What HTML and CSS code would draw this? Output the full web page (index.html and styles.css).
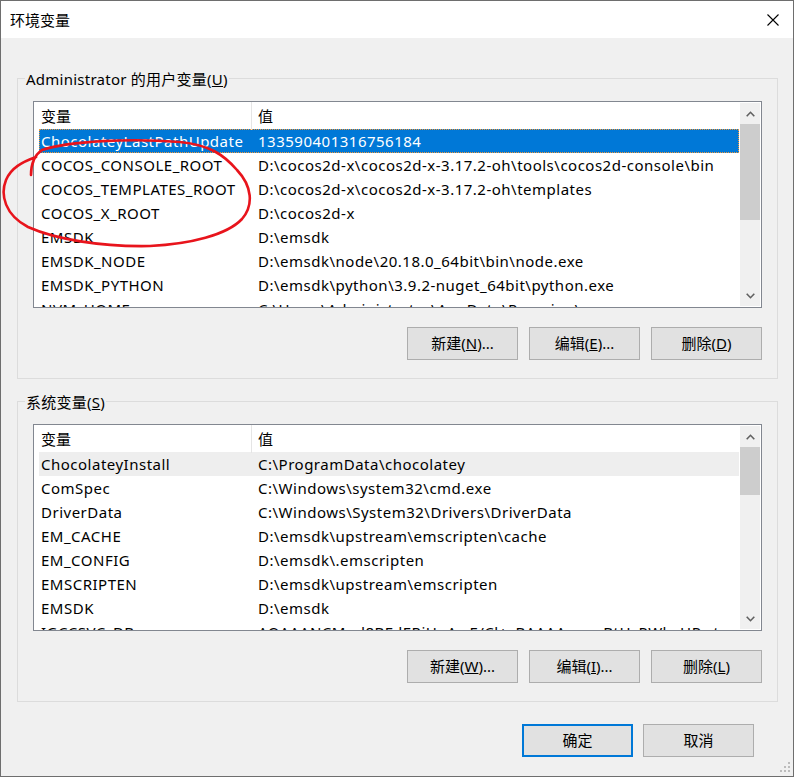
FILE: index.html
```html
<!DOCTYPE html>
<html lang="zh-CN">
<head>
<meta charset="utf-8">
<title>环境变量</title>
<link rel="stylesheet" href="styles.css">
</head>
<body>
<div class="window">
  <div class="titlebar">
    <span class="title">环境变量</span>
    <svg class="close" width="12" height="12" viewBox="0 0 12 12"><path d="M0.5 0.5 L11.5 11.5 M11.5 0.5 L0.5 11.5" stroke="#000" stroke-width="1.1" fill="none"/></svg>
  </div>

  <div class="content">
    <div class="group">
      <span class="group-label">Administrator 的用户变量(<u>U</u>)</span>
      <div class="list">
        <div class="list-body">
          <div class="thead"><div class="th">变量</div><div class="th th-val">值</div></div>
          <div class="row selected"><div class="c1">ChocolateyLastPathUpdate</div><div class="c2">133590401316756184</div></div>
          <div class="row"><div class="c1">COCOS_CONSOLE_ROOT</div><div class="c2">D:\cocos2d-x\cocos2d-x-3.17.2-oh\tools\cocos2d-console\bin</div></div>
          <div class="row"><div class="c1">COCOS_TEMPLATES_ROOT</div><div class="c2">D:\cocos2d-x\cocos2d-x-3.17.2-oh\templates</div></div>
          <div class="row"><div class="c1">COCOS_X_ROOT</div><div class="c2">D:\cocos2d-x</div></div>
          <div class="row"><div class="c1">EMSDK</div><div class="c2">D:\emsdk</div></div>
          <div class="row"><div class="c1">EMSDK_NODE</div><div class="c2">D:\emsdk\node\20.18.0_64bit\bin\node.exe</div></div>
          <div class="row"><div class="c1">EMSDK_PYTHON</div><div class="c2">D:\emsdk\python\3.9.2-nuget_64bit\python.exe</div></div>
          <div class="row"><div class="c1">NVM_HOME</div><div class="c2">C:\Users\Administrator\AppData\Roaming\nvm</div></div>
        </div>
        <div class="scrollbar">
          <div class="sb-btn"><svg width="9" height="6" viewBox="0 0 9 6"><polyline points="0.7,5.3 4.5,1.3 8.3,5.3" fill="none" stroke="#606060" stroke-width="1.6"/></svg></div>
          <div class="sb-track"><div class="sb-thumb thumb-user"></div></div>
          <div class="sb-btn"><svg width="9" height="6" viewBox="0 0 9 6"><polyline points="0.7,0.7 4.5,4.7 8.3,0.7" fill="none" stroke="#606060" stroke-width="1.6"/></svg></div>
        </div>
      </div>
      <div class="btn-row">
        <button class="btn">新建(<u>N</u>)...</button>
        <button class="btn">编辑(<u>E</u>)...</button>
        <button class="btn">删除(<u>D</u>)</button>
      </div>
    </div>

    <div class="group group-sys">
      <span class="group-label">系统变量(<u>S</u>)</span>
      <div class="list">
        <div class="list-body">
          <div class="thead"><div class="th">变量</div><div class="th th-val">值</div></div>
          <div class="row inactive"><div class="c1">ChocolateyInstall</div><div class="c2">C:\ProgramData\chocolatey</div></div>
          <div class="row"><div class="c1">ComSpec</div><div class="c2">C:\Windows\system32\cmd.exe</div></div>
          <div class="row"><div class="c1">DriverData</div><div class="c2">C:\Windows\System32\Drivers\DriverData</div></div>
          <div class="row"><div class="c1">EM_CACHE</div><div class="c2">D:\emsdk\upstream\emscripten\cache</div></div>
          <div class="row"><div class="c1">EM_CONFIG</div><div class="c2">D:\emsdk\.emscripten</div></div>
          <div class="row"><div class="c1">EMSCRIPTEN</div><div class="c2">D:\emsdk\upstream\emscripten</div></div>
          <div class="row"><div class="c1">EMSDK</div><div class="c2">D:\emsdk</div></div>
          <div class="row"><div class="c1">IGCCSVC_DB</div><div class="c2">AQAAANCMnd8BFdERjHoAwE/Cl+sBAAAAoxnnBtHzPWbsHPwt</div></div>
        </div>
        <div class="scrollbar">
          <div class="sb-btn"><svg width="9" height="6" viewBox="0 0 9 6"><polyline points="0.7,5.3 4.5,1.3 8.3,5.3" fill="none" stroke="#606060" stroke-width="1.6"/></svg></div>
          <div class="sb-track"><div class="sb-thumb thumb-sys"></div></div>
          <div class="sb-btn"><svg width="9" height="6" viewBox="0 0 9 6"><polyline points="0.7,0.7 4.5,4.7 8.3,0.7" fill="none" stroke="#606060" stroke-width="1.6"/></svg></div>
        </div>
      </div>
      <div class="btn-row">
        <button class="btn">新建(<u>W</u>)...</button>
        <button class="btn">编辑(<u>I</u>)...</button>
        <button class="btn">删除(<u>L</u>)</button>
      </div>
    </div>

    <div class="footer">
      <button class="btn btn-default">确定</button>
      <button class="btn">取消</button>
    </div>
  </div>

  <svg class="annotation" width="260" height="260" viewBox="0 0 260 260">
    <path d="M31,175 C31,165 33,156 42,150 C70,141 130,138 180,142 C210,145 224,155 237,170 C252,186 254,205 242,219 C227,235 190,244 150,246 C100,247 55,239 28,227 C5,215 0,195 6,180 C11,168 22,162 36,157" fill="none" stroke="#e8141c" stroke-width="2.6" stroke-linecap="round"/>
  </svg>

  <svg class="grip" width="12" height="12" viewBox="0 0 12 12">
    <rect x="9" y="0" width="2" height="2" fill="#bcbcbc"/>
    <rect x="5" y="4" width="2" height="2" fill="#bcbcbc"/>
    <rect x="9" y="4" width="2" height="2" fill="#bcbcbc"/>
    <rect x="1" y="8" width="2" height="2" fill="#bcbcbc"/>
    <rect x="5" y="8" width="2" height="2" fill="#bcbcbc"/>
    <rect x="9" y="8" width="2" height="2" fill="#bcbcbc"/>
  </svg>
</div>
</body>
</html>
```

FILE: styles.css
```css
* { box-sizing: border-box; }

html, body {
  margin: 0;
  padding: 0;
  background: #f0f0f0;
}

body {
  font-family: "Noto Sans", "Noto Sans CJK SC", sans-serif;
  font-size: 15px;
  color: #000;
}

.window {
  position: relative;
  width: 794px;
  height: 777px;
  border: 1px solid #6e6e6e;
  background: #f0f0f0;
  overflow: hidden;
}

.titlebar {
  height: 37px;
  background: #fff;
  display: flex;
  align-items: center;
  justify-content: space-between;
  padding-left: 9px;
  padding-right: 14px;
}

.title {
  font-size: 15px;
  line-height: 20px;
}

.close { display: block; }

.content {
  padding: 40px 15px 0 16px;
}

.group {
  position: relative;
  border: 1px solid #dcdcdc;
  padding: 22px 15px 18px 15px;
}

.group-sys {
  margin-top: 22px;
}

.group-label {
  position: absolute;
  top: -11px;
  left: 7px;
  padding: 0 1px;
  background: #f0f0f0;
  line-height: 22px;
  white-space: nowrap;
  letter-spacing: 0.25px;
}

.list {
  height: 207px;
  border: 1px solid #828790;
  background: #fff;
  display: flex;
  overflow: hidden;
}

.list-body {
  flex: 1;
  min-width: 0;
  overflow: hidden;
  padding-right: 1px;
}

.thead {
  height: 27px;
  display: grid;
  grid-template-columns: 217px 1fr;
}

.th {
  padding-left: 7px;
  line-height: 28px;
  white-space: nowrap;
}

.th-val {
  border-left: 1px solid #e5e5e5;
  padding-left: 6px;
}

.row {
  height: 24px;
  margin-left: 5px;
  display: grid;
  grid-template-columns: 212px 1fr;
  line-height: 24px;
  white-space: nowrap;
}

.c1 {
  padding-left: 2px;
  overflow: hidden;
  letter-spacing: 0.5px;
}

.c2 {
  padding-left: 7px;
  overflow: hidden;
  letter-spacing: 0.5px;
}

.row.selected {
  background: #0078d7;
  color: #fff;
  outline: 1px dotted #f0983a;
  outline-offset: -1px;
}

.row.inactive {
  background: #eeeeee;
}

.scrollbar {
  width: 20px;
  margin: 1px 1px 1px 0;
  background: #f0f0f0;
  display: flex;
  flex-direction: column;
}

.sb-btn {
  height: 21px;
  display: flex;
  align-items: center;
  justify-content: center;
  flex: none;
}

.sb-track {
  flex: 1;
}

.sb-thumb {
  background: #cdcdcd;
}

.thumb-user { height: 96px; }
.thumb-sys { height: 48px; }

.btn-row {
  margin-top: 19px;
  display: flex;
  justify-content: flex-end;
  gap: 11px;
}

.btn {
  width: 111px;
  height: 33px;
  border: 1px solid #adadad;
  background: #e1e1e1;
  font-family: "Noto Sans", "Noto Sans CJK SC", sans-serif;
  font-size: 15px;
  color: #000;
  padding: 0 0 1px 0;
  line-height: 20px;
}

.btn-default {
  border: 2px solid #0078d7;
}

.footer {
  margin-top: 22px;
  display: flex;
  justify-content: flex-end;
  gap: 10px;
  padding-right: 24px;
}

.annotation {
  position: absolute;
  left: -1px;
  top: -1px;
  pointer-events: none;
}

.grip {
  position: absolute;
  right: 2px;
  bottom: 2px;
}
```
